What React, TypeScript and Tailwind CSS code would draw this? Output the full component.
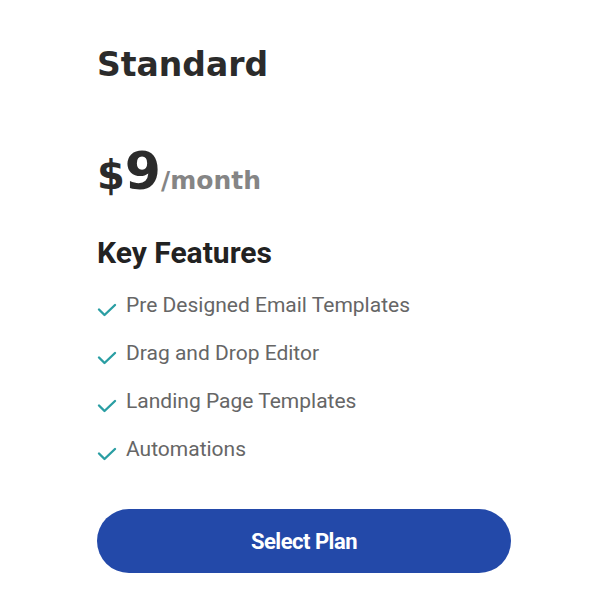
import React from "react";

const features = [
  "Pre Designed Email Templates",
  "Drag and Drop Editor",
  "Landing Page Templates",
  "Automations",
];

function Check() {
  return (
    <svg width="20" height="14" viewBox="0 0 20 14" fill="none" className="shrink-0">
      <path d="M2 6.5 L7.5 12 L18 2" stroke="#2a9ea3" strokeWidth="2.4" strokeLinecap="round" strokeLinejoin="round" />
    </svg>
  );
}

export default function App() {
  return (
    <div className="w-[600px] h-[600px] bg-white flex flex-col pl-[97px] pt-[45px]" style={{ fontFamily: "Roboto, 'Liberation Sans', sans-serif" }}>
      <h2 className="text-[33px] leading-[40px] font-bold text-[#2b2b2b]" style={{ fontFamily: "'DejaVu Sans', sans-serif" }}>
        Standard
      </h2>
      <div className="mt-[60px] flex items-baseline text-[#2b2b2b]" style={{ fontFamily: "'DejaVu Sans', sans-serif" }}>
        <span className="text-[40px] font-bold leading-none">$</span>
        <span className="text-[52px] font-bold leading-none">9</span>
        <span className="text-[25px] font-bold leading-none text-[#858585]">/month</span>
      </div>
      <h3 className="mt-[38px] text-[30px] leading-[36px] font-bold text-[#222]">Key Features</h3>
      <ul className="mt-[22px] flex flex-col gap-[24px]">
        {features.map((f) => (
          <li key={f} className="flex items-center text-[21px] leading-[24px] text-[#666]">
            <span className="w-[29px] pt-[9px]">
              <Check />
            </span>
            {f}
          </li>
        ))}
      </ul>
      <button className="mt-[48px] w-[414px] h-[64px] rounded-full bg-[#2349a9] text-white text-[22px] font-bold tracking-[-0.5px]">
        Select Plan
      </button>
    </div>
  );
}
